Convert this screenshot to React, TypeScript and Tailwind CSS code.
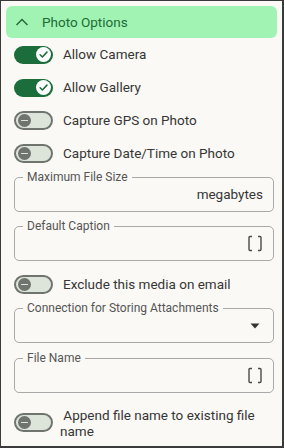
import React from "react";

function SwitchOn() {
  return (
    <div className="relative w-[39px] h-[18px] rounded-full bg-[#1b6e3b] shrink-0">
      <div className="absolute right-[2px] top-[1.5px] w-[15px] h-[15px] rounded-full bg-white flex items-center justify-center">
        <svg width="11" height="11" viewBox="0 0 12 12">
          <path d="M2.3 6.3 L4.8 8.7 L9.8 3.4" fill="none" stroke="#1b6e3b" strokeWidth="1.7" strokeLinecap="round" strokeLinejoin="round" />
        </svg>
      </div>
    </div>
  );
}

function SwitchOff() {
  return (
    <div className="relative w-[39px] h-[19px] rounded-full bg-[#dde4d9] border-2 border-[#6f756e] shrink-0">
      <div className="absolute left-[1.5px] top-[1px] w-[13px] h-[13px] rounded-full bg-[#6f756e] flex items-center justify-center">
        <div className="w-[7px] h-[1.5px] bg-[#dde4d9]" />
      </div>
    </div>
  );
}

function Row({ on, label }: { on: boolean; label: string }) {
  return (
    <div className="h-[33px] flex items-center gap-[10px] pl-[13px]">
      {on ? <SwitchOn /> : <SwitchOff />}
      <span className="text-[13.5px] text-[#363636]">{label}</span>
    </div>
  );
}

function Brackets() {
  return (
    <svg width="16" height="17" viewBox="0 0 16 17">
      <path d="M5 1.5 H3 Q2 1.5 2 2.5 V14.5 Q2 15.5 3 15.5 H5" fill="none" stroke="#4a4a4a" strokeWidth="1.4" />
      <path d="M11 1.5 H13 Q14 1.5 14 2.5 V14.5 Q14 15.5 13 15.5 H11" fill="none" stroke="#4a4a4a" strokeWidth="1.4" />
    </svg>
  );
}

function Field({ label, children, className }: { label: string; children?: React.ReactNode; className?: string }) {
  return (
    <div className={"relative mx-[13px] w-[260px] h-[35px] border border-[#a9a9a9] rounded-[5px] flex items-center justify-end pr-[10px] " + (className || "")}>
      <span className="absolute left-[8px] -top-[9px] px-[4px] bg-[#faf9f5] text-[12px] leading-[16px] text-[#555]">{label}</span>
      {children}
    </div>
  );
}

export default function App() {
  return (
    <div
      className="w-[284px] h-[448px] bg-[#faf9f5] border-l border-t border-r-2 border-b-2 border-[#3a3a3a] overflow-hidden flex flex-col"
      style={{ fontFamily: "Roboto, 'Noto Sans', sans-serif" }}
    >
      <div className="mx-[5px] mt-[5px] h-[32px] rounded-[6px] bg-[#a0f3b3] flex items-center">
        <svg className="ml-[9px]" width="14" height="10" viewBox="0 0 14 10">
          <path d="M1.5 8 L7 2.5 L12.5 8" fill="none" stroke="#2a6a3c" strokeWidth="1.5" />
        </svg>
        <span className="ml-[13px] text-[13.5px] text-[#1e6b34]">Photo Options</span>
      </div>
      <Row on label="Allow Camera" />
      <Row on label="Allow Gallery" />
      <Row on={false} label="Capture GPS on Photo" />
      <Row on={false} label="Capture Date/Time on Photo" />
      <Field label="Maximum File Size" className="mt-[7px]">
        <span className="text-[13.5px] text-[#363636]">megabytes</span>
      </Field>
      <Field label="Default Caption" className="mt-[14px]">
        <Brackets />
      </Field>
      <div className="mt-[7px]">
        <Row on={false} label="Exclude this media on email" />
      </div>
      <Field label="Connection for Storing Attachments" className="mt-[7px]">
        <svg width="10" height="6" viewBox="0 0 10 6" className="mr-[3px]">
          <path d="M0.5 0.5 H9.5 L5 5.5 Z" fill="#333" />
        </svg>
      </Field>
      <Field label="File Name" className="mt-[15px]">
        <Brackets />
      </Field>
      <div className="mt-[16px] flex items-start pl-[13px]">
        <div className="mt-[4px]">
          <SwitchOff />
        </div>
        <span className="ml-[7px] text-[13.5px] leading-[16px] text-[#363636] w-[210px] whitespace-pre-wrap -mt-[2px]">{" Append file name to existing file name"}</span>
      </div>
    </div>
  );
}
